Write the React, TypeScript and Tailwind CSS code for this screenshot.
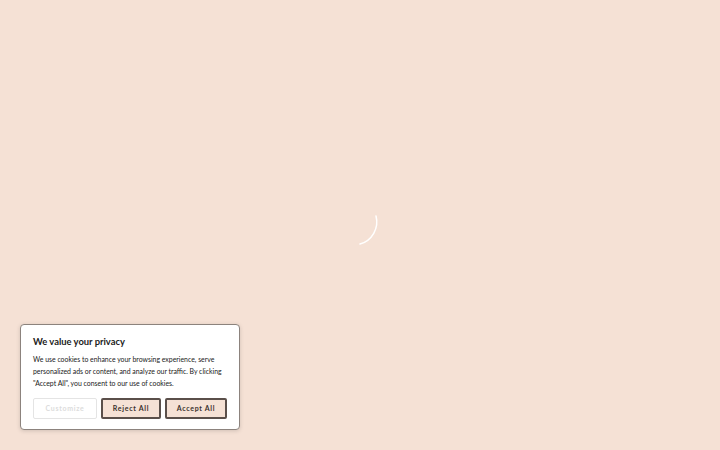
export default function App() {
  return (
    <div
      className="relative h-[450px] w-[720px] overflow-hidden bg-[#f5e1d5]"
      style={{ fontFamily: 'Lato, "Noto Sans", sans-serif' }}
    >
      <div className="flex h-full items-center justify-center">
        <svg width="48" height="48" viewBox="0 0 48 48">
          <path
            d="M 40 15 A 23 23 0 0 1 24 43"
            fill="none"
            stroke="#ffffff"
            strokeWidth="1.5"
            strokeLinecap="round"
          />
        </svg>
      </div>

      <div className="absolute bottom-[20px] left-[20px] w-[220px] rounded-[4px] border border-[#8c837d] bg-white px-[12px] pb-[10px] pt-[10px] shadow-[0_1px_4px_rgba(0,0,0,0.15)]">
        <h2 className="text-[9.4px] font-bold leading-[14px] text-[#212121]">We value your privacy</h2>
        <p className="mt-[4px] text-[6.9px] leading-[12px] text-[#212121]">
          We use cookies to enhance your browsing experience, serve personalized ads or content, and analyze our
          traffic. By clicking "Accept All", you consent to our use of cookies.
        </p>
        <div className="mt-[9px] flex gap-[4px]">
          <button className="h-[21px] w-[64px] rounded-[2px] border border-[#e4e4e4] bg-white text-[7px] font-bold tracking-[0.1em] text-[#dcdcdc]">
            Customize
          </button>
          <button className="h-[21px] w-[60px] rounded-[2px] border-2 border-[#5a4f4a] bg-[#f5e1d5] text-[7px] font-bold tracking-[0.1em] text-[#3a302c]">
            Reject All
          </button>
          <button className="h-[21px] w-[62px] rounded-[2px] border-2 border-[#5a4f4a] bg-[#f5e1d5] text-[7px] font-bold tracking-[0.1em] text-[#3a302c]">
            Accept All
          </button>
        </div>
      </div>
    </div>
  );
}
